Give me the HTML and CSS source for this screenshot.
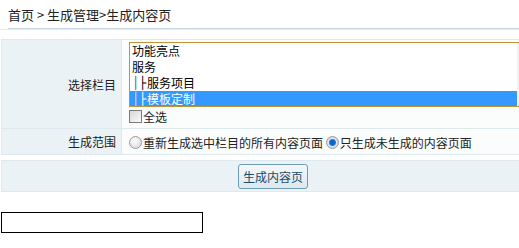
FILE: index.html
```html
<!DOCTYPE html>
<html lang="zh-CN">
<head>
  <meta charset="UTF-8">
  <title>生成内容页</title>
  <link rel="stylesheet" href="styles.css">
</head>
<body>
  <div class="top">
    <div class="nav">首页 &gt; 生成管理&gt;生成内容页</div>
  </div>

  <table class="form">
    <tr class="row-cat">
      <th>选择栏目</th>
      <td>
        <div class="listbox">
          <div class="options">
            <div class="opt">功能亮点</div>
            <div class="opt">服务</div>
            <div class="opt"><span class="v">│</span><span class="t">├</span>服务项目</div>
            <div class="opt selected"><span class="v">│</span><span class="t">├</span>模板定制</div>
          </div>
          <div class="scroll">
            <span class="arrow up"></span>
            <span class="thumb"></span>
            <span class="arrow down"></span>
          </div>
        </div>
        <label class="check"><span class="box"></span>全选</label>
      </td>
    </tr>
    <tr class="row-range">
      <th>生成范围</th>
      <td>
        <label class="radio"><span class="dot"></span>重新生成选中栏目的所有内容页面</label>
        <label class="radio"><span class="dot on"></span>只生成未生成的内容页面</label>
      </td>
    </tr>
  </table>

  <div class="actions">
    <button class="btn">生成内容页</button>
  </div>

  <div class="empty"></div>
</body>
</html>
```

FILE: styles.css
```css
html {
  overflow: hidden;
}

body {
  margin: 0;
  font-family: "Noto Sans CJK SC", "Liberation Sans", sans-serif;
  font-size: 12px;
  color: #222;
  background: #fff;
}

.top {
  border-bottom: 1px solid #e4ecf2;
}

.nav {
  margin-left: 8px;
  height: 28px;
  line-height: 30px;
  font-size: 13px;
  border-bottom: 1px solid #c5d4e2;
}

.form {
  margin: 9px 0 0 1px;
  width: 560px;
  border-collapse: collapse;
}

.form th,
.form td {
  border: 1px solid #dde8ef;
}

.form th {
  width: 114px;
  padding: 0 5px 0 0;
  text-align: right;
  font-weight: normal;
  background: #eaf2f6;
}

.form td {
  padding: 0 0 0 7px;
  background: #fbfdfd;
}

.row-cat td {
  height: 86px;
  vertical-align: top;
  padding-top: 2px;
}

.row-range td,
.row-range th {
  height: 24px;
}

.listbox {
  display: flex;
  width: 405px;
  height: 63px;
  border: 1px solid #bf9434;
  background: #fff;
  overflow: hidden;
}

.options {
  flex: 1;
}

.opt {
  height: 16px;
  line-height: 16px;
  padding-left: 2px;
  color: #000;
  white-space: nowrap;
}

.opt.selected {
  background: #3399ff;
  color: #fff;
}

.v,
.t {
  display: inline-block;
  font-family: "DejaVu Sans", sans-serif;
  overflow: hidden;
  vertical-align: top;
}

.v {
  width: 8px;
  color: #1a5fb8;
}

.t {
  width: 7px;
  text-indent: -1px;
  color: #000;
}

.selected .v {
  color: #fbd3e0;
}

.selected .t {
  color: #fff;
}

.scroll {
  width: 17px;
  display: flex;
  flex-direction: column;
  align-items: center;
  background: #f1f1f1;
  padding: 0 0 0 1px;
}

.arrow {
  width: 0;
  height: 0;
  border-left: 3px solid transparent;
  border-right: 3px solid transparent;
  margin-left: -6px;
}

.arrow.up {
  margin-top: 9px;
  border-bottom: 3px solid #555;
}

.arrow.down {
  margin-top: auto;
  margin-bottom: 9px;
  border-top: 3px solid #555;
}

.thumb {
  width: 12px;
  height: 12px;
  margin-top: 7px;
  border: 1px solid #9a9a9a;
  border-radius: 2px;
  background: repeating-linear-gradient(#fff 0 2px, #777 2px 3px) center / 6px 7px no-repeat, #f4f4f4;
}

.check,
.radio {
  display: inline-flex;
  align-items: center;
  height: 19px;
  color: #222;
}

.box {
  width: 11px;
  height: 11px;
  border: 1px solid #7a7a7a;
  background: linear-gradient(135deg, #d7d7d7, #fbfbfb);
  margin: 0 1px 0 0;
}

.row-range td {
  padding-top: 1px;
}

.dot {
  width: 11px;
  height: 11px;
  border-radius: 50%;
  border: 1px solid #9c9c9c;
  background: radial-gradient(circle at 40% 35%, #fff, #d2d2d2);
  margin-right: 1px;
}

.dot.on {
  background: radial-gradient(circle, #0d63c9 0 2px, #1e7fdf 3px, #dfe6ee 4px, #b9c2cc);
}

.actions {
  margin: 5px 0 0 1px;
  width: 560px;
  height: 32px;
  border: 1px solid #dde8ef;
  background: #eaf2f6;
  padding-left: 236px;
  box-sizing: border-box;
  display: flex;
  align-items: center;
}

.btn {
  height: 25px;
  padding: 0 4px;
  font: inherit;
  color: #1d4a69;
  border: 1px solid #6f9bb4;
  border-radius: 3px;
  background: linear-gradient(#f3f8fa, #dce8ef);
}

.empty {
  margin: 20px 0 0 1px;
  width: 200px;
  height: 19px;
  border: 1px solid #000;
}
```
